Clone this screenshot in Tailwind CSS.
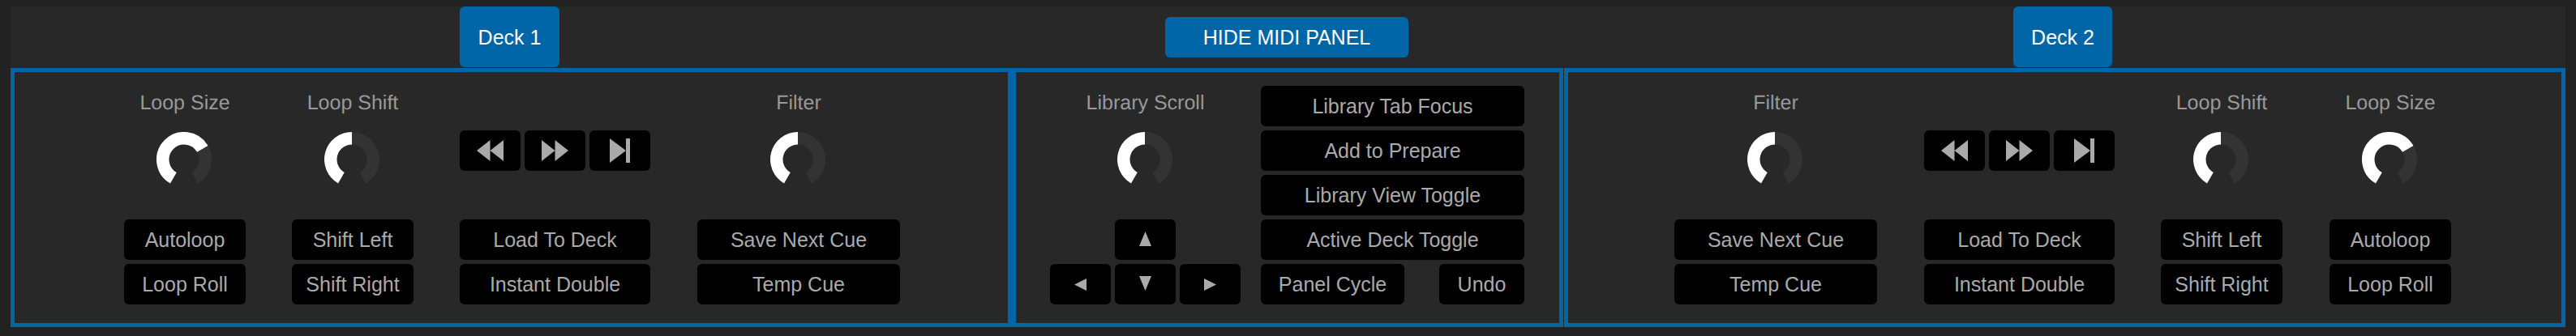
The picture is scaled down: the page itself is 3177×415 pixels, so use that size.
<!DOCTYPE html>
<html lang="en">
<head>
    <meta charset="UTF-8">
    <title>MIDI Panel</title>
    <script src="https://cdn.jsdelivr.net/npm/@tailwindcss/browser@4"></script>
</head>
<body class="bg-[#222222] font-['Liberation_Sans',sans-serif] text-[25px] leading-[28px] [text-rendering:geometricPrecision]">
    <div class="w-[3177px] h-[415px] pt-[8px] pl-[13px] overflow-hidden">
        <div class="w-[3151px] bg-[#282828]">

            <!-- Top buttons -->
            <div class="flex h-[76px] pl-[554px] text-white">
                <button class="w-[123px] h-[75px] pt-px rounded-[6px] bg-[#0066a8]">Deck 1</button>
                <button class="w-[300px] h-[50px] mt-[13px] ml-[747px] rounded-[6px] bg-[#0066a8]">HIDE MIDI PANEL</button>
                <button class="w-[122px] h-[75px] pt-px ml-[746px] rounded-[6px] bg-[#0066a8]">Deck 2</button>
            </div>

            <div class="flex h-[320px] text-[#aaaaaa]">

                <!-- Deck 1 -->
                <div class="flex w-[1235px] h-full pl-[135px] gap-[57px] border-[5px] border-[#0066a8]">
                    <div class="flex flex-col items-center w-[150px] pt-[21px]">
                        <div class="h-[34px] leading-[34px] text-[#999999]">Loop Size</div>
                        <svg class="mt-[19px] mr-[2px]" width="68" height="68" viewBox="0 0 68 68" fill="none" stroke-width="15.5"><path d="M20.875 56.733A26.25 26.25 0 1 1 47.125 56.733" stroke="#333333"/><path d="M20.875 56.733A26.25 26.25 0 1 1 56.733 20.875" stroke="#ffffff"/></svg>
                        <button class="w-full h-[50px] mt-[40px] rounded-[6px] bg-black">Autoloop</button>
                        <button class="w-full h-[50px] mt-[5px] rounded-[6px] bg-black">Loop Roll</button>
                    </div>
                    <div class="flex flex-col items-center w-[150px] pt-[21px]">
                        <div class="h-[34px] leading-[34px] text-[#999999]">Loop Shift</div>
                        <svg class="mt-[19px] mr-[2px]" width="68" height="68" viewBox="0 0 68 68" fill="none" stroke-width="15.5"><path d="M20.875 56.733A26.25 26.25 0 1 1 47.125 56.733" stroke="#333333"/><path d="M20.875 56.733A26.25 26.25 0 0 1 34 7.75" stroke="#ffffff"/></svg>
                        <button class="w-full h-[50px] mt-[40px] rounded-[6px] bg-black">Shift Left</button>
                        <button class="w-full h-[50px] mt-[5px] rounded-[6px] bg-black">Shift Right</button>
                    </div>
                    <div class="flex flex-col w-[235px] pt-[72px]">
                        <div class="flex gap-[5px]">
                            <button class="flex items-center justify-center w-[75px] h-[50px] rounded-[6px] bg-black"><svg width="33" height="26" viewBox="0 0 33 26" fill="#aaaaaa"><path d="M0 13 16.5 0V26ZM16.5 13 33 0V26Z"/></svg></button>
                            <button class="flex items-center justify-center w-[75px] h-[50px] rounded-[6px] bg-black"><svg width="33" height="26" viewBox="0 0 33 26" fill="#aaaaaa"><path d="M0 0 16.5 13 0 26ZM16.5 0 33 13 16.5 26Z"/></svg></button>
                            <button class="flex items-center justify-center w-[75px] h-[50px] rounded-[6px] bg-black"><svg width="25" height="30" viewBox="0 0 25 30" fill="#aaaaaa"><path d="M0 0 20 15 0 30ZM20 0H25V30H20Z"/></svg></button>
                        </div>
                        <button class="w-full h-[50px] mt-[60px] rounded-[6px] bg-black">Load To Deck</button>
                        <button class="w-full h-[50px] mt-[5px] rounded-[6px] bg-black">Instant Double</button>
                    </div>
                    <div class="flex flex-col items-center w-[250px] ml-px pt-[21px]">
                        <div class="h-[34px] leading-[34px] text-[#999999]">Filter</div>
                        <svg class="mt-[19px] mr-[2px]" width="68" height="68" viewBox="0 0 68 68" fill="none" stroke-width="15.5"><path d="M20.875 56.733A26.25 26.25 0 1 1 47.125 56.733" stroke="#333333"/><path d="M20.875 56.733A26.25 26.25 0 0 1 34 7.75" stroke="#ffffff"/></svg>
                        <button class="w-full h-[50px] mt-[40px] rounded-[6px] bg-black">Save Next Cue</button>
                        <button class="w-full h-[50px] mt-[5px] rounded-[6px] bg-black">Temp Cue</button>
                    </div>
                </div>

                <!-- Library -->
                <div class="flex w-[680px] h-full pl-[42px] gap-[25px] border-[5px] border-[#0066a8]">
                    <div class="flex flex-col items-center w-[235px] pt-[21px]">
                        <div class="h-[34px] leading-[34px] text-[#999999]">Library Scroll</div>
                        <svg class="mt-[19px] mr-[2px]" width="68" height="68" viewBox="0 0 68 68" fill="none" stroke-width="15.5"><path d="M20.875 56.733A26.25 26.25 0 1 1 47.125 56.733" stroke="#333333"/><path d="M20.875 56.733A26.25 26.25 0 0 1 34 7.75" stroke="#ffffff"/></svg>
                        <button class="flex items-center justify-center w-[75px] h-[50px] mt-[40px] rounded-[6px] bg-black"><svg class="mb-[2px]" width="15" height="18" viewBox="0 0 15 18" fill="#aaaaaa"><path d="M7.5 0 15 18H0Z"/></svg></button>
                        <div class="flex gap-[5px] mt-[5px]">
                            <button class="flex items-center justify-center w-[75px] h-[50px] rounded-[6px] bg-black"><svg width="15" height="15" viewBox="0 0 15 15" fill="#aaaaaa"><path d="M0 7.5 15 0V15Z"/></svg></button>
                            <button class="flex items-center justify-center w-[75px] h-[50px] rounded-[6px] bg-black"><svg class="mb-[2px]" width="15" height="18" viewBox="0 0 15 18" fill="#aaaaaa"><path d="M0 0H15L7.5 18Z"/></svg></button>
                            <button class="flex items-center justify-center w-[75px] h-[50px] rounded-[6px] bg-black"><svg width="15" height="15" viewBox="0 0 15 15" fill="#aaaaaa"><path d="M0 0 15 7.5 0 15Z"/></svg></button>
                        </div>
                    </div>
                    <div class="flex flex-col gap-[5px] w-[325px] pt-[17px]">
                        <button class="h-[50px] rounded-[6px] bg-black">Library Tab Focus</button>
                        <button class="h-[50px] rounded-[6px] bg-black">Add to Prepare</button>
                        <button class="h-[50px] rounded-[6px] bg-black">Library View Toggle</button>
                        <button class="h-[50px] rounded-[6px] bg-black">Active Deck Toggle</button>
                        <div class="flex justify-between">
                            <button class="w-[177px] h-[50px] rounded-[6px] bg-black">Panel Cycle</button>
                            <button class="w-[105px] h-[50px] rounded-[6px] bg-black">Undo</button>
                        </div>
                    </div>
                </div>

                <!-- Deck 2 -->
                <div class="flex w-[1235px] h-full ml-px pl-[131px] gap-[58px] border-[5px] border-[#0066a8]">
                    <div class="flex flex-col items-center w-[250px] pt-[21px]">
                        <div class="h-[34px] leading-[34px] text-[#999999]">Filter</div>
                        <svg class="mt-[19px] mr-[2px]" width="68" height="68" viewBox="0 0 68 68" fill="none" stroke-width="15.5"><path d="M20.875 56.733A26.25 26.25 0 1 1 47.125 56.733" stroke="#333333"/><path d="M20.875 56.733A26.25 26.25 0 0 1 34 7.75" stroke="#ffffff"/></svg>
                        <button class="w-full h-[50px] mt-[40px] rounded-[6px] bg-black">Save Next Cue</button>
                        <button class="w-full h-[50px] mt-[5px] rounded-[6px] bg-black">Temp Cue</button>
                    </div>
                    <div class="flex flex-col w-[235px] pt-[72px]">
                        <div class="flex gap-[5px]">
                            <button class="flex items-center justify-center w-[75px] h-[50px] rounded-[6px] bg-black"><svg width="33" height="26" viewBox="0 0 33 26" fill="#aaaaaa"><path d="M0 13 16.5 0V26ZM16.5 13 33 0V26Z"/></svg></button>
                            <button class="flex items-center justify-center w-[75px] h-[50px] rounded-[6px] bg-black"><svg width="33" height="26" viewBox="0 0 33 26" fill="#aaaaaa"><path d="M0 0 16.5 13 0 26ZM16.5 0 33 13 16.5 26Z"/></svg></button>
                            <button class="flex items-center justify-center w-[75px] h-[50px] rounded-[6px] bg-black"><svg width="25" height="30" viewBox="0 0 25 30" fill="#aaaaaa"><path d="M0 0 20 15 0 30ZM20 0H25V30H20Z"/></svg></button>
                        </div>
                        <button class="w-full h-[50px] mt-[60px] rounded-[6px] bg-black">Load To Deck</button>
                        <button class="w-full h-[50px] mt-[5px] rounded-[6px] bg-black">Instant Double</button>
                    </div>
                    <div class="flex flex-col items-center w-[150px] -ml-px pt-[21px]">
                        <div class="h-[34px] leading-[34px] text-[#999999]">Loop Shift</div>
                        <svg class="mt-[19px] mr-[2px]" width="68" height="68" viewBox="0 0 68 68" fill="none" stroke-width="15.5"><path d="M20.875 56.733A26.25 26.25 0 1 1 47.125 56.733" stroke="#333333"/><path d="M20.875 56.733A26.25 26.25 0 0 1 34 7.75" stroke="#ffffff"/></svg>
                        <button class="w-full h-[50px] mt-[40px] rounded-[6px] bg-black">Shift Left</button>
                        <button class="w-full h-[50px] mt-[5px] rounded-[6px] bg-black">Shift Right</button>
                    </div>
                    <div class="flex flex-col items-center w-[150px] pt-[21px]">
                        <div class="h-[34px] leading-[34px] text-[#999999]">Loop Size</div>
                        <svg class="mt-[19px] mr-[2px]" width="68" height="68" viewBox="0 0 68 68" fill="none" stroke-width="15.5"><path d="M20.875 56.733A26.25 26.25 0 1 1 47.125 56.733" stroke="#333333"/><path d="M20.875 56.733A26.25 26.25 0 1 1 56.733 20.875" stroke="#ffffff"/></svg>
                        <button class="w-full h-[50px] mt-[40px] rounded-[6px] bg-black">Autoloop</button>
                        <button class="w-full h-[50px] mt-[5px] rounded-[6px] bg-black">Loop Roll</button>
                    </div>
                </div>

            </div>
        </div>
    </div>
</body>
</html>
